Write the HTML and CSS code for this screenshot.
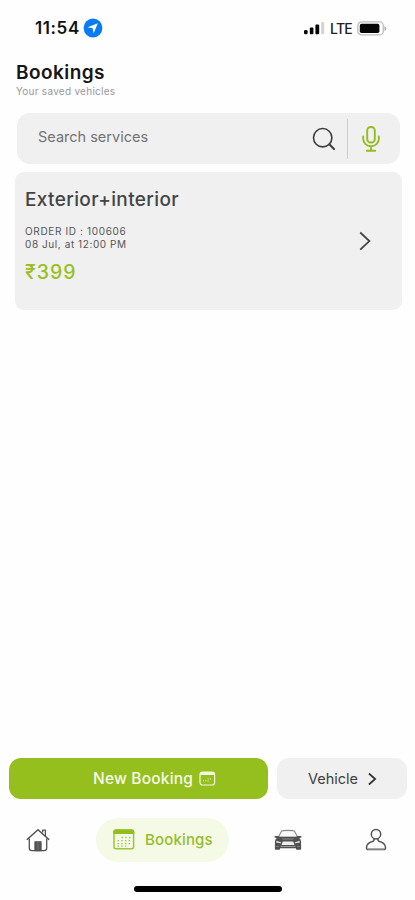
FILE: index.html
```html
<!DOCTYPE html>
<html lang="en">
<head>
<meta charset="utf-8">
<title>Bookings</title>
<link rel="stylesheet" href="styles.css">
</head>
<body>
<div class="screen">
  <div class="status">
    <span class="time">11:54</span>
    <svg class="location" width="20" height="20" viewBox="0 0 20 20"><circle cx="10" cy="10" r="9.4" fill="#087bf5"/><path d="M14.8 5.2 4.6 9.3l5 1 1.1 5z" fill="#fff"/></svg>
    <svg class="signal" width="21" height="14" viewBox="0 0 21 14"><g fill="#050505"><rect x="0" y="9" width="3.6" height="4.2" rx="1.2"/><rect x="5.8" y="6.5" width="3.6" height="6.7" rx="1"/><rect x="11.4" y="3.5" width="3.8" height="9.7" rx="1"/></g><rect x="17.2" y="1" width="3" height="12.2" rx="1" fill="#d4d4d4"/></svg>
    <span class="network">LTE</span>
    <svg class="battery" width="30" height="15" viewBox="0 0 30 15"><rect x=".8" y=".9" width="25.5" height="13" rx="4" fill="#fff" stroke="#bdbdbd" stroke-width="1.3"/><rect x="2.8" y="2.8" width="19.6" height="9.3" rx="1.8" fill="#050505"/><path d="M27.5 5v5q1.8-1 1.8-2.500T27.500 5z" fill="#aaa"/></svg>
  </div>
  <header class="heading">
    <h1>Bookings</h1>
    <p>Your saved vehicles</p>
  </header>
  <div class="search">
    <span class="placeholder">Search services</span>
    <svg class="lens" width="24" height="24" viewBox="0 0 24 24" fill="none" stroke="#3d3d3d" stroke-linecap="round"><circle cx="10.700" cy="10.700" r="9.200" stroke-width="1.600"/><path d="m17.300 17.300 4.700 4.700" stroke-width="2"/></svg>
    <span class="divider"></span>
    <svg class="mic" width="18" height="26" viewBox="0 0 18 26" fill="none" stroke="#93bd1d" stroke-width="1.900" stroke-linecap="round"><rect x="5.200" y="1" width="7.600" height="15.500" rx="3.500"/><path d="M1.200 10.500v2.500a7.800 7.200 0 0 0 15.600 0v-2.500M9 20.400v4M4.800 24.700h8.400"/></svg>
  </div>
  <article class="order">
    <div class="details">
      <h2>Exterior+interior</h2>
      <p class="meta id">ORDER ID : 100606</p>
      <p class="meta date">08 Jul, at 12:00 PM</p>
      <p class="price">₹399</p>
    </div>
    <svg class="chevron" width="12" height="20" viewBox="0 0 12 20" fill="none" stroke="#444" stroke-width="1.800"><path d="m1.200 1.500 9.200 8.600-9.200 8.600"/></svg>
  </article>
  <div class="actions">
    <div class="new"><span>New Booking</span>
      <svg width="17" height="15" viewBox="0 0 17 15"><rect x="1" y="1" width="14.600" height="13" rx="2.500" fill="none" stroke="#f4fae2" stroke-width="1.200"/><path d="M1 4V3q0-2 2-2h10.600q2 0 2 2v1z" fill="#f4fae2"/><path d="M4 9.700h1m1.300 0h1m1.300-1.800h1m1.300 0h1m-3.300 2.300h1" stroke="#dcebb0" stroke-width="1.200"/></svg>
    </div>
    <div class="vehicle"><span>Vehicle</span>
      <svg width="9" height="14" viewBox="0 0 9 14" fill="none" stroke="#333" stroke-width="1.700"><path d="m.9 1.500 6.300 5.500-6.300 5.500"/></svg>
    </div>
  </div>
  <nav class="tabs">
    <svg class="home" width="24" height="24" viewBox="0 0 24 24" fill="none" stroke="#505050" stroke-width="1.300" stroke-linejoin="round"><path d="M3.300 10.500V20q0 2.600 2.600 2.600h12.200q2.600 0 2.600-2.600v-9.500"/><path d="m.8 11.700 11.200-10 11.200 10" stroke-width="1.500"/><path d="M16.600 4.600V2.200h2.800V8"/><path d="M9 22.500v-8.700h6v8.700z" fill="#555"/><path d="M12 14v8" stroke="#888" stroke-width=".6"/></svg>
    <div class="active">
      <svg width="22" height="21" viewBox="0 0 22 21"><rect x="1" y="1" width="19.600" height="18.800" rx="2" fill="none" stroke="#9ac63b" stroke-width="1.500"/><path d="M.3 5V2.700Q.300.500 2.700.500h16.200q2.400 0 2.400 2.200V5z" fill="#93bd1d"/><path d="M8.500 8.500h9.500M4.500 11.600h13.500M4.500 14.600h13.500M4.500 17.200h9" stroke="#9fc64a" stroke-width="1.300" stroke-dasharray="1.500 2.200"/></svg>
      <span>Bookings</span>
    </div>
    <svg class="car" width="28" height="22" viewBox="0 0 28 22"><path d="M4.500 8 7 2.900Q7.500 1.700 9 1.600q5-.5 10 0 1.500.1 2 1.300L23.500 8z" fill="#f9f9f9" stroke="#888" stroke-width="1.100"/><path d="M.6 7h3.600l1.300.9h17l1.300-.9h3.600v1.500l-2.200.5q1.900 1.500 1.900 4v7q0 .8-.8.8h-3.500q-.8 0-.8-.8v-.7H6v.7q0 .8-.8.800H1.700q-.8 0-.8-.8v-7Q.900 10.500 2.800 9L.6 8.500z" fill="#505050"/><path d="M7.500 9.300h13L19 10.800H9z" fill="#777"/><path d="M8.800 12.500h10.400l1.300 3.500H7.500z" fill="#eee"/><path d="m2.300 11.700 4.800 1.500v1.100l-4.800-.5zm23.400 0-4.800 1.500v1.100l4.800-.5z" fill="#ddd"/><path d="M6.500 17.500h15" stroke="#999" stroke-width="1"/><path d="M2.200 17.500h2.500m18.600 0h2.500" stroke="#888"/></svg>
    <svg class="user" width="22" height="23" viewBox="0 0 22 23" fill="none" stroke="#555" stroke-width="1.500"><circle cx="11" cy="6.200" r="4.700"/><path d="M9 10.500q.5 2.500-1.500 3Q2 14.800 1.500 19.300q-.2 2.200 1.700 2.200h15.600q1.900 0 1.700-2.200-.5-4.500-6-5.800-2-.5-1.500-3"/><path d="M2.800 20.800h16.400" stroke="#aaa"/></svg>
  </nav>
  <div class="indicator"></div>
</div>
</body>
</html>
```
FILE: styles.css
```css
* { box-sizing: border-box; }
body { margin: 0; background: #fefefe; font-family: Inter, "Liberation Sans", sans-serif; color: #333; }
h1, h2, p { margin: 0; }
svg { display: block; flex: none; }
span { white-space: nowrap; }
.screen { width: 415px; height: 900px; display: flex; flex-direction: column; overflow: hidden; }
.status { height: 56px; display: flex; align-items: center; padding-left: 35px; flex: none; }
.time { width: 48px; font-size: 17px; font-weight: 600; color: #111; letter-spacing: .6px; }
.signal { margin-left: 201px; }
.network { width: 28px; margin-left: 5px; font-size: 14px; font-weight: 500; color: #222; letter-spacing: -.7px; }
.battery { margin-left: -1px; }
.heading { height: 57px; padding: 5px 0 0 16px; }
h1 { font-size: 19px; line-height: 24px; font-weight: 600; color: #161616; letter-spacing: .45px; }
.heading p { font-size: 10px; line-height: 12px; color: #999; letter-spacing: .27px; }
.search { width: 383px; height: 51px; margin-left: 17px; padding: 0 20px 0 21px; border-radius: 13px; background: #f0f0f0; display: flex; align-items: center; flex: none; }
.placeholder { font-size: 14.5px; color: #737373; margin-top: -4px; flex: 1; letter-spacing: 0; }
.divider { width: 1px; height: 40px; margin: 0 14px 0 11px; background: #cecece; }
.order { width: 387px; height: 138px; margin: 8px 0 0 15px; padding: 0 31px 0 10px; display: flex; align-items: center; border-radius: 9px; background: #f0f0f0; flex: none; }
.details { flex: 1; align-self: stretch; padding-top: 16px; }
h2 { font-size: 19px; line-height: 24px; font-weight: 500; color: #444; letter-spacing: .36px; }
.meta { font-size: 10px; line-height: 13px; color: #555; }
.id { margin-top: 13px; letter-spacing: .65px; }
.date { letter-spacing: .58px; }
.price { margin-top: 9px; font-size: 19.5px; line-height: 24px; font-weight: 500; color: #9abf20; letter-spacing: 1px; }
.actions { margin-top: auto; padding-left: 9px; display: flex; gap: 9px; flex: none; }
.new, .vehicle { height: 41px; border-radius: 12px; display: flex; align-items: center; }
.new { width: 259px; padding-left: 84px; gap: 6px; background: #94bf1d; color: #f7fbe9; font-size: 15.5px; font-weight: 500; letter-spacing: .2px; }
.vehicle { width: 130px; padding-left: 31px; gap: 10px; background: #f0f0f0; color: #404040; font-size: 14.5px; }
.tabs { height: 63px; margin-top: 9px; padding-left: 26px; display: flex; align-items: center; flex: none; }
.active { width: 133px; height: 44px; margin-left: 46px; padding-left: 17px; border-radius: 22px; background: #f4fae5; display: flex; align-items: center; gap: 10px; color: #96bd2c; font-size: 15px; font-weight: 500; letter-spacing: .15px; }
.car { margin-left: 45px; }
.user { margin-left: 63px; }
.indicator { width: 148px; height: 6px; margin: 15px 0 8px 134px; border-radius: 3px; background: #000; flex: none; }
```
